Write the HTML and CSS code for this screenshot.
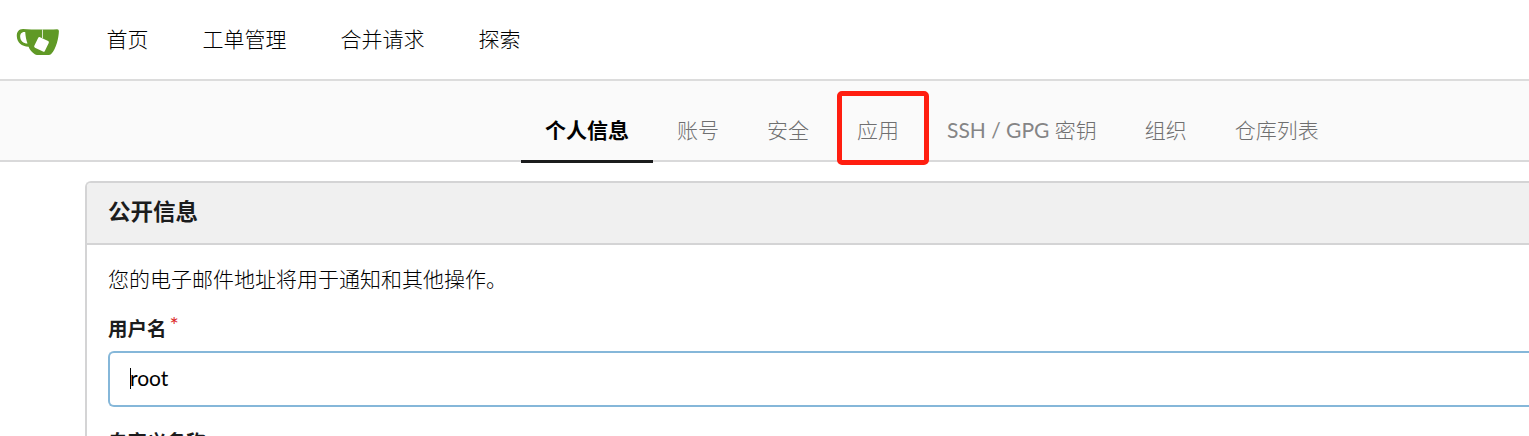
FILE: index.html
```html
<!DOCTYPE html>
<html lang="zh-CN">
<head>
<meta charset="utf-8">
<title>个人信息</title>
<link rel="stylesheet" href="styles.css">
</head>
<body>
<nav class="navbar">
  <a class="brand">
    <svg viewBox="0 0 44 28" width="44" height="28">
      <path fill="#609926" fill-rule="evenodd" d="M7 1C2.500 1 .6 4.500 .8 8.300C1.100 14.500 5.500 18.600 12.600 18.700C13.500 21.500 16.300 24.700 18.800 26.200Q19.800 26.900 21 26.900H32.500Q34.300 26.900 35.400 25.700C40 21 42.800 10 42.900 3Q42.900 1.200 41.200 1.200C31 1.700 16 1.700 7 1ZM8.400 3.900C5.200 3.900 4 6.300 4.200 9C4.500 12.900 7.200 15.500 11.500 15.600C10.300 12.200 9.500 8.500 9.200 4Z"/>
      <path stroke="#fff" stroke-opacity=".75" stroke-width="1" fill="none" d="M26.500 1.500V10"/>
      <rect x="19.700" y="10.500" width="11.700" height="11.700" rx="1.400" fill="#fff" transform="rotate(26 25.500 16.300)"/>
    </svg>
  </a>
  <a class="nav-item">首页</a>
  <a class="nav-item">工单管理</a>
  <a class="nav-item">合并请求</a>
  <a class="nav-item">探索</a>
</nav>
<div class="tabs">
  <a class="tab active">个人信息</a>
  <a class="tab">账号</a>
  <a class="tab">安全</a>
  <a class="tab marked">应用</a>
  <a class="tab"><span class="latin">SSH / GPG </span>密钥</a>
  <a class="tab">组织</a>
  <a class="tab">仓库列表</a>
</div>
<main class="content">
  <section class="card">
    <h4 class="card-title">公开信息</h4>
    <div class="card-body">
      <p class="hint">您的电子邮件地址将用于通知和其他操作。</p>
      <div class="label">用户名<span class="required">*</span></div>
      <div class="input"><span class="caret"></span>root</div>
      <div class="label">自定义名称</div>
    </div>
  </section>
</main>
</body>
</html>
```
FILE: styles.css
```css
*, *::after { box-sizing: border-box; }
html, body { height: 100%; overflow: hidden; }
body {
  display: flex;
  flex-direction: column;
  margin: 0;
  background: #fff;
  color: #000;
  font-family: Lato, "Noto Sans CJK SC", sans-serif;
  font-size: 21px;
  font-weight: 300;
  line-height: 30px;
}
.navbar {
  display: flex;
  flex: none;
  align-items: center;
  gap: 54px;
  height: 81px;
  padding: 0 0 2px 16px;
  border-bottom: 2px solid #dcdcdc;
  white-space: nowrap;
}
.brand { display: flex; width: 44px; margin: 6px -7.500px 0 0; }
.tabs {
  display: flex;
  flex: none;
  height: 81px;
  padding: 19px 0 0 521px;
  background: #fafafa;
  border-bottom: 2px solid #d9d9da;
  white-space: nowrap;
}
.tab {
  position: relative;
  height: 63px;
  padding: 15px 24px 0;
  color: #6f6f70;
}
.tab.active {
  border-bottom: 3px solid #1b1c1d;
  color: #000;
  font-weight: 700;
}
.tab.marked::after {
  content: "";
  position: absolute;
  left: 4px;
  top: -9px;
  width: 92px;
  height: 74px;
  border: 5px solid #ff1e10;
  border-radius: 5px;
}
.latin { font-weight: 400; white-space: pre; color: #858586; }
.content {
  display: flex;
  flex: 1;
  min-height: 0;
  padding: 19px 0 0 85px;
  overflow: hidden;
}
.card {
  flex: 1;
  border: 2px solid #d4d4d5;
  border-width: 2px 0 0 2px;
  border-radius: 6px 0 0 0;
  overflow: hidden;
}
.card-title {
  height: 62px;
  margin: 0;
  padding: 14px 21px;
  background: #f0f0f0;
  border-bottom: 2px solid #d4d4d5;
  color: #1b1c1d;
  font-size: 22.5px;
  font-weight: 700;
}
.card-body { padding: 19px 0 0 21px; }
.hint { margin: 0 0 20px; }
.label {
  height: 30px;
  color: #1b1c1d;
  font-size: 19.5px;
  font-weight: 700;
}
.required {
  position: relative;
  top: -3px;
  margin-left: 3px;
  color: #db2828;
  font-size: 22px;
  font-weight: 400;
  line-height: 20px;
}
.input {
  display: flex;
  align-items: center;
  height: 56px;
  margin: 7px 0 20px;
  padding: 0 0 2px 20px;
  border: 2px solid #85b7d9;
  border-right: 0;
  border-radius: 6px 0 0 6px;
  font-weight: 400;
}
.caret { width: 1px; height: 21px; margin-right: -1px; background: #000; }
```
